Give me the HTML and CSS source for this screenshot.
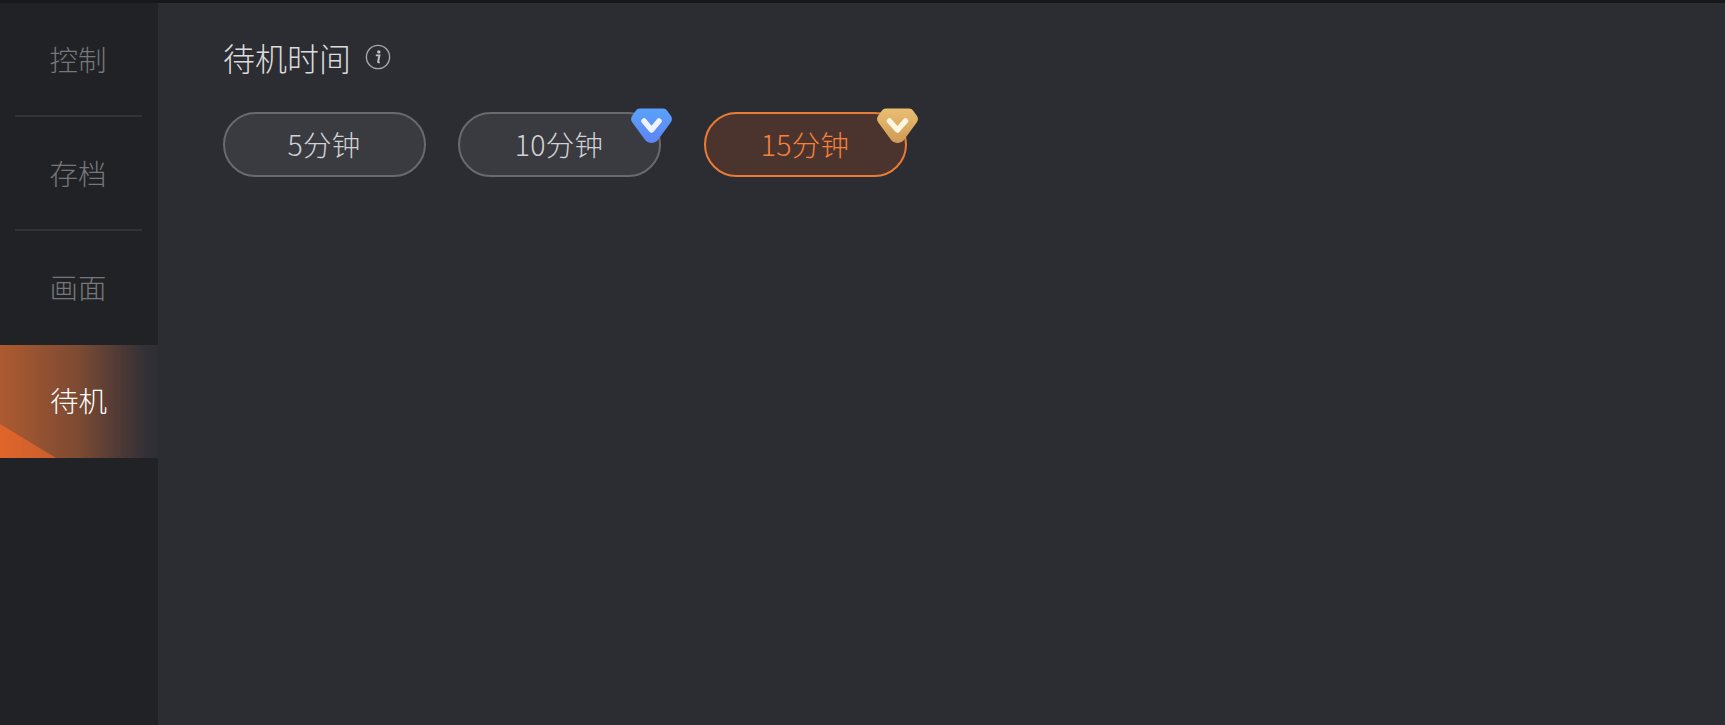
FILE: index.html
```html
<!DOCTYPE html>
<html lang="zh-CN">
<head>
  <meta charset="UTF-8">
  <title>待机时间</title>
  <link rel="stylesheet" href="styles.css">
</head>
<body>
  <div class="topbar"></div>
  <div class="layout">
    <nav class="sidebar">
      <div class="tab"><span>控制</span></div>
      <div class="tab"><span>存档</span></div>
      <div class="tab last"><span>画面</span></div>
      <div class="tab active"><span>待机</span></div>
    </nav>
    <main class="content">
      <div class="title-row">
        <h2>待机时间</h2>
        <svg class="info" viewBox="0 0 26 26" width="26" height="26">
          <circle cx="13" cy="13" r="11.6" fill="none" stroke="#a9a9ab" stroke-width="1.4"/>
          <circle cx="13.8" cy="7.9" r="1.7" fill="#c4c4c6"/>
          <path d="M10.8 11.4h3.6l-1.3 6.4c-.1.5.3.7 1.6.3" fill="none" stroke="#c4c4c6" stroke-width="1.9"/>
        </svg>
      </div>
      <div class="options">
        <div class="pill"><span>5分钟</span></div>
        <div class="pill wide-gap"><span>10分钟</span>
          <svg class="badge" viewBox="0 0 41 37" width="41" height="37">
            <defs>
              <linearGradient id="blue" x1="0" y1="0" x2="0" y2="1">
                <stop offset="0" stop-color="#5aa2fb"/>
                <stop offset="1" stop-color="#5f84f4"/>
              </linearGradient>
            </defs>
            <path d="M9 .5h23c2 0 3 .7 4 2l4 5.500c1.300 2 1.300 4.500-.3 6.500L26.500 32.500c-3 3.300-9 3.300-12 0L1.300 14.500C-.3 12.500-.3 10 1 8l4-5.500C6 1.200 7 .5 9 .5z" fill="url(#blue)"/>
            <path d="M13 13l7.500 9 7.500-9" fill="none" stroke="#eef3fe" stroke-width="5.500" stroke-linecap="round" stroke-linejoin="round"/>
          </svg>
        </div>
        <div class="pill selected"><span>15分钟</span>
          <svg class="badge" viewBox="0 0 41 37" width="41" height="37">
            <defs>
              <linearGradient id="gold" x1="0" y1="0" x2="0" y2="1">
                <stop offset="0" stop-color="#e9bf72"/>
                <stop offset="1" stop-color="#cf9a55"/>
              </linearGradient>
            </defs>
            <path d="M9 .5h23c2 0 3 .7 4 2l4 5.500c1.300 2 1.300 4.500-.3 6.500L26.500 32.500c-3 3.300-9 3.300-12 0L1.300 14.500C-.3 12.500-.3 10 1 8l4-5.500C6 1.200 7 .5 9 .5z" fill="url(#gold)"/>
            <path d="M12.500 13l8 9 8-9" fill="none" stroke="#fff6e2" stroke-width="5.500" stroke-linecap="round" stroke-linejoin="round"/>
          </svg>
        </div>
      </div>
    </main>
  </div>
</body>
</html>
```

FILE: styles.css
```css
* {
  box-sizing: border-box;
}

body {
  margin: 0;
  height: 725px;
  overflow: hidden;
  display: flex;
  flex-direction: column;
  background: #2c2d32;
  font-family: "Noto Sans CJK SC", "Noto Sans", sans-serif;
  font-weight: 300;
}

.topbar {
  height: 3px;
  background: #17181a;
}

.layout {
  flex: 1;
  display: flex;
}

.sidebar {
  width: 158px;
  background: #212225;
}

.tab {
  height: 114px;
  padding: 0 1px 1px 0;
  display: flex;
  align-items: center;
  justify-content: center;
  font-size: 28.5px;
  color: #76777a;
  border-bottom: 2px solid #323337;
  margin: 0 16px 0 15px;
}

.tab.last {
  border-bottom: none;
  padding-bottom: 3px;
}

.tab.active {
  position: relative;
  height: 113px;
  margin: 0;
  padding: 0 1px 5px 0;
  border-bottom: none;
  color: #fff;
  background: linear-gradient(90deg, #ad5a30 0%, #7c4a32 50%, #4a3836 78%, #333136 92%, #2d2e33 100%);
}

.tab.active::before {
  content: "";
  position: absolute;
  left: 0;
  bottom: 0;
  width: 56px;
  height: 34px;
  background: linear-gradient(90deg, #e0652a, #c95f2d);
  clip-path: polygon(0 0, 100% 100%, 0 100%);
}

.tab.active span {
  position: relative;
}

.content {
  flex: 1;
  padding: 32px 0 0 65px;
}

.title-row {
  display: flex;
  align-items: center;
  gap: 14px;
  height: 44px;
}

h2 {
  margin: 0;
  font-size: 32px;
  font-weight: 300;
  color: #dcdcde;
}

.info {
  display: block;
}

.options {
  display: flex;
  margin-top: 33px;
}

.pill {
  position: relative;
  width: 203px;
  height: 65px;
  padding: 0 1px 3px 0;
  margin-right: 32px;
  display: flex;
  align-items: center;
  justify-content: center;
  font-size: 28.5px;
  letter-spacing: .3px;
  color: #d2d2d4;
  background: #393b40;
  border: 2px solid #6a6a6c;
  border-radius: 33px;
}

.pill.wide-gap {
  margin-right: 43px;
}

.pill.selected {
  color: #f5813a;
  background: #4b342e;
  border-color: #e97d38;
}

.badge {
  position: absolute;
  top: -6px;
  right: -13px;
}
```
